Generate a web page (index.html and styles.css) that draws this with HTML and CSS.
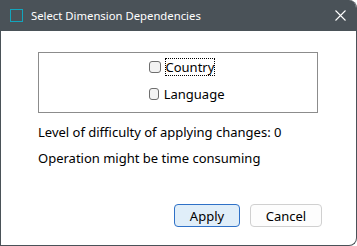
FILE: index.html
```html
<!DOCTYPE html>
<html lang="en">
  <head>
    <meta charset="utf-8">
    <title>Select Dimension Dependencies</title>
    <link rel="stylesheet" href="styles.css">
  </head>
  <body>
    <div class="window">
      <div class="titlebar">
        <span class="app-icon"></span>
        <span class="title">Select Dimension Dependencies</span>
        <svg class="close" width="11" height="11" viewBox="0 0 11 11">
          <path d="M0.5 0.5 L10.5 10.5 M10.5 0.5 L0.5 10.5" stroke="#fff" stroke-width="1.1" fill="none"/>
        </svg>
      </div>
      <div class="content">
        <div class="group">
          <label class="check"><span class="box"></span><span class="label focused">Country</span></label>
          <label class="check"><span class="box"></span><span class="label">Language</span></label>
        </div>
        <p class="info">Level of difficulty of applying changes: 0</p>
        <p class="info">Operation might be time consuming</p>
        <div class="buttons">
          <button class="btn primary">Apply</button>
          <button class="btn">Cancel</button>
        </div>
      </div>
    </div>
  </body>
</html>
```

FILE: styles.css
```css
body {
  margin: 0;
  padding: 0;
  background-color: #fff;
  font-family: 'Noto Sans', 'Open Sans', sans-serif;
  font-size: 13px;
  color: #000;
}

.window {
  width: 357px;
  height: 246px;
  box-sizing: border-box;
  border: 1px solid #4a5258;
  border-top: none;
  border-radius: 0 8px 8px 0;
  overflow: hidden;
  background-color: #fff;
  display: flex;
  flex-direction: column;
}

.titlebar {
  height: 31px;
  background-color: #4a5258;
  color: #fff;
  display: flex;
  align-items: center;
  padding: 0 10px 0 9px;
}

.app-icon {
  width: 11px;
  height: 11px;
  border: 1px solid #12a5bd;
  margin-right: 8px;
}

.title {
  flex: 1;
  font-size: 11.3px;
}

.content {
  flex: 1;
  padding: 21px 38px 0 37px;
}

.group {
  height: 59px;
  box-sizing: border-box;
  height: 61px;
  padding-bottom: 5px;
  border: 1px solid #8c8c8c;
  display: flex;
  flex-direction: column;
  align-items: center;
  justify-content: center;
  gap: 11px;
}

.check {
  display: flex;
  align-items: center;
  width: 76px;
  margin-left: 17px;
}

.box {
  width: 10px;
  height: 10px;
  border: 1px solid #6e6e6e;
  border-radius: 3px;
  background-color: #f3f3f3;
  margin-right: 5px;
}

.label {
  line-height: 16px;
}

.label.focused {
  outline: 1px dotted #000;
  outline-offset: 0;
}

.info {
  margin: 0;
  line-height: 16px;
}

.info:first-of-type {
  margin-top: 11px;
}

.info + .info {
  margin-top: 10px;
}

.buttons {
  display: flex;
  justify-content: flex-end;
  gap: 10px;
  margin-top: 38px;
  margin-right: -4px;
}

.btn {
  font-family: inherit;
  font-size: 13px;
  height: 23px;
  padding: 0;
  background-color: #fdfdfd;
  border: 1px solid #d0d0d0;
  border-radius: 4px;
  color: #000;
  width: 72px;
}

.btn.primary {
  width: 66px;
  background-color: #e0eef9;
  border-color: #2f71c7;
}
```
